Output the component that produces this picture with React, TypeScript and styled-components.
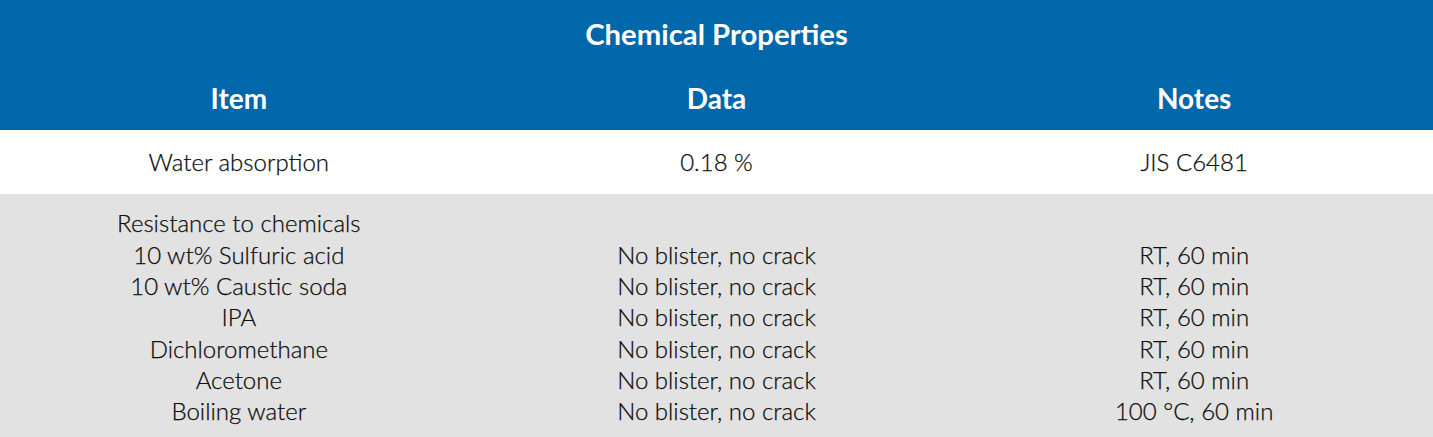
import React from "react";
import styled, { createGlobalStyle } from "styled-components";

const Global = createGlobalStyle`
  html, body { margin: 0; padding: 0; background: #ffffff; }
  body { font-family: Lato, "Open Sans", sans-serif; }
`;

const Table = styled.div`
  width: 1433px;
  display: flex;
  flex-direction: column;
  font-family: Lato, "Open Sans", sans-serif;
`;

const Head = styled.div`
  background: #0067ab;
  color: #ffffff;
  display: flex;
  flex-direction: column;
`;

const Title = styled.div`
  height: 66px;
  display: flex;
  align-items: center;
  justify-content: center;
  font-size: 29.3px;
  font-weight: 700;
`;

const HeadRow = styled.div`
  height: 64px;
  display: grid;
  grid-template-columns: repeat(3, 1fr);
  align-items: center;
`;

const HeadCell = styled.div`
  text-align: center;
  font-size: 28px;
  font-weight: 700;
`;

const Row = styled.div<{ $bg: string; $pt: number; $pb: number }>`
  display: grid;
  grid-template-columns: repeat(3, 1fr);
  background: ${(p) => p.$bg};
  padding: ${(p) => p.$pt}px 0 ${(p) => p.$pb}px;
  color: #0d0d0d;
  font-size: 24px;
  font-weight: 300;
  line-height: 31.3px;
  -webkit-text-stroke: 0.25px #0d0d0d;
`;

const Cell = styled.div`
  display: flex;
  flex-direction: column;
  align-items: center;
  text-align: center;
`;

const Line = styled.div`
  height: 31.3px;
  white-space: nowrap;
`;

const chem = [
  ["10 wt% Sulfuric acid", "No blister, no crack", "RT, 60 min"],
  ["10 wt% Caustic soda", "No blister, no crack", "RT, 60 min"],
  ["IPA", "No blister, no crack", "RT, 60 min"],
  ["Dichloromethane", "No blister, no crack", "RT, 60 min"],
  ["Acetone", "No blister, no crack", "RT, 60 min"],
  ["Boiling water", "No blister, no crack", "100 °C, 60 min"],
];

export default function App() {
  return (
    <>
      <Global />
      <Table>
        <Head>
          <Title>Chemical Properties</Title>
          <HeadRow>
            <HeadCell>Item</HeadCell>
            <HeadCell>Data</HeadCell>
            <HeadCell>Notes</HeadCell>
          </HeadRow>
        </Head>
        <Row $bg="#ffffff" $pt={16} $pb={16.7}>
          <Cell><Line>Water absorption</Line></Cell>
          <Cell><Line>0.18 %</Line></Cell>
          <Cell><Line>JIS C6481</Line></Cell>
        </Row>
        <Row $bg="#e2e2e2" $pt={13.4} $pb={10.5}>
          <Cell>
            <Line>Resistance to chemicals</Line>
            {chem.map((c) => (
              <Line key={c[0]}>{c[0]}</Line>
            ))}
          </Cell>
          <Cell>
            <Line />
            {chem.map((c) => (
              <Line key={c[0]}>{c[1]}</Line>
            ))}
          </Cell>
          <Cell>
            <Line />
            {chem.map((c) => (
              <Line key={c[0]}>{c[2]}</Line>
            ))}
          </Cell>
        </Row>
      </Table>
    </>
  );
}
